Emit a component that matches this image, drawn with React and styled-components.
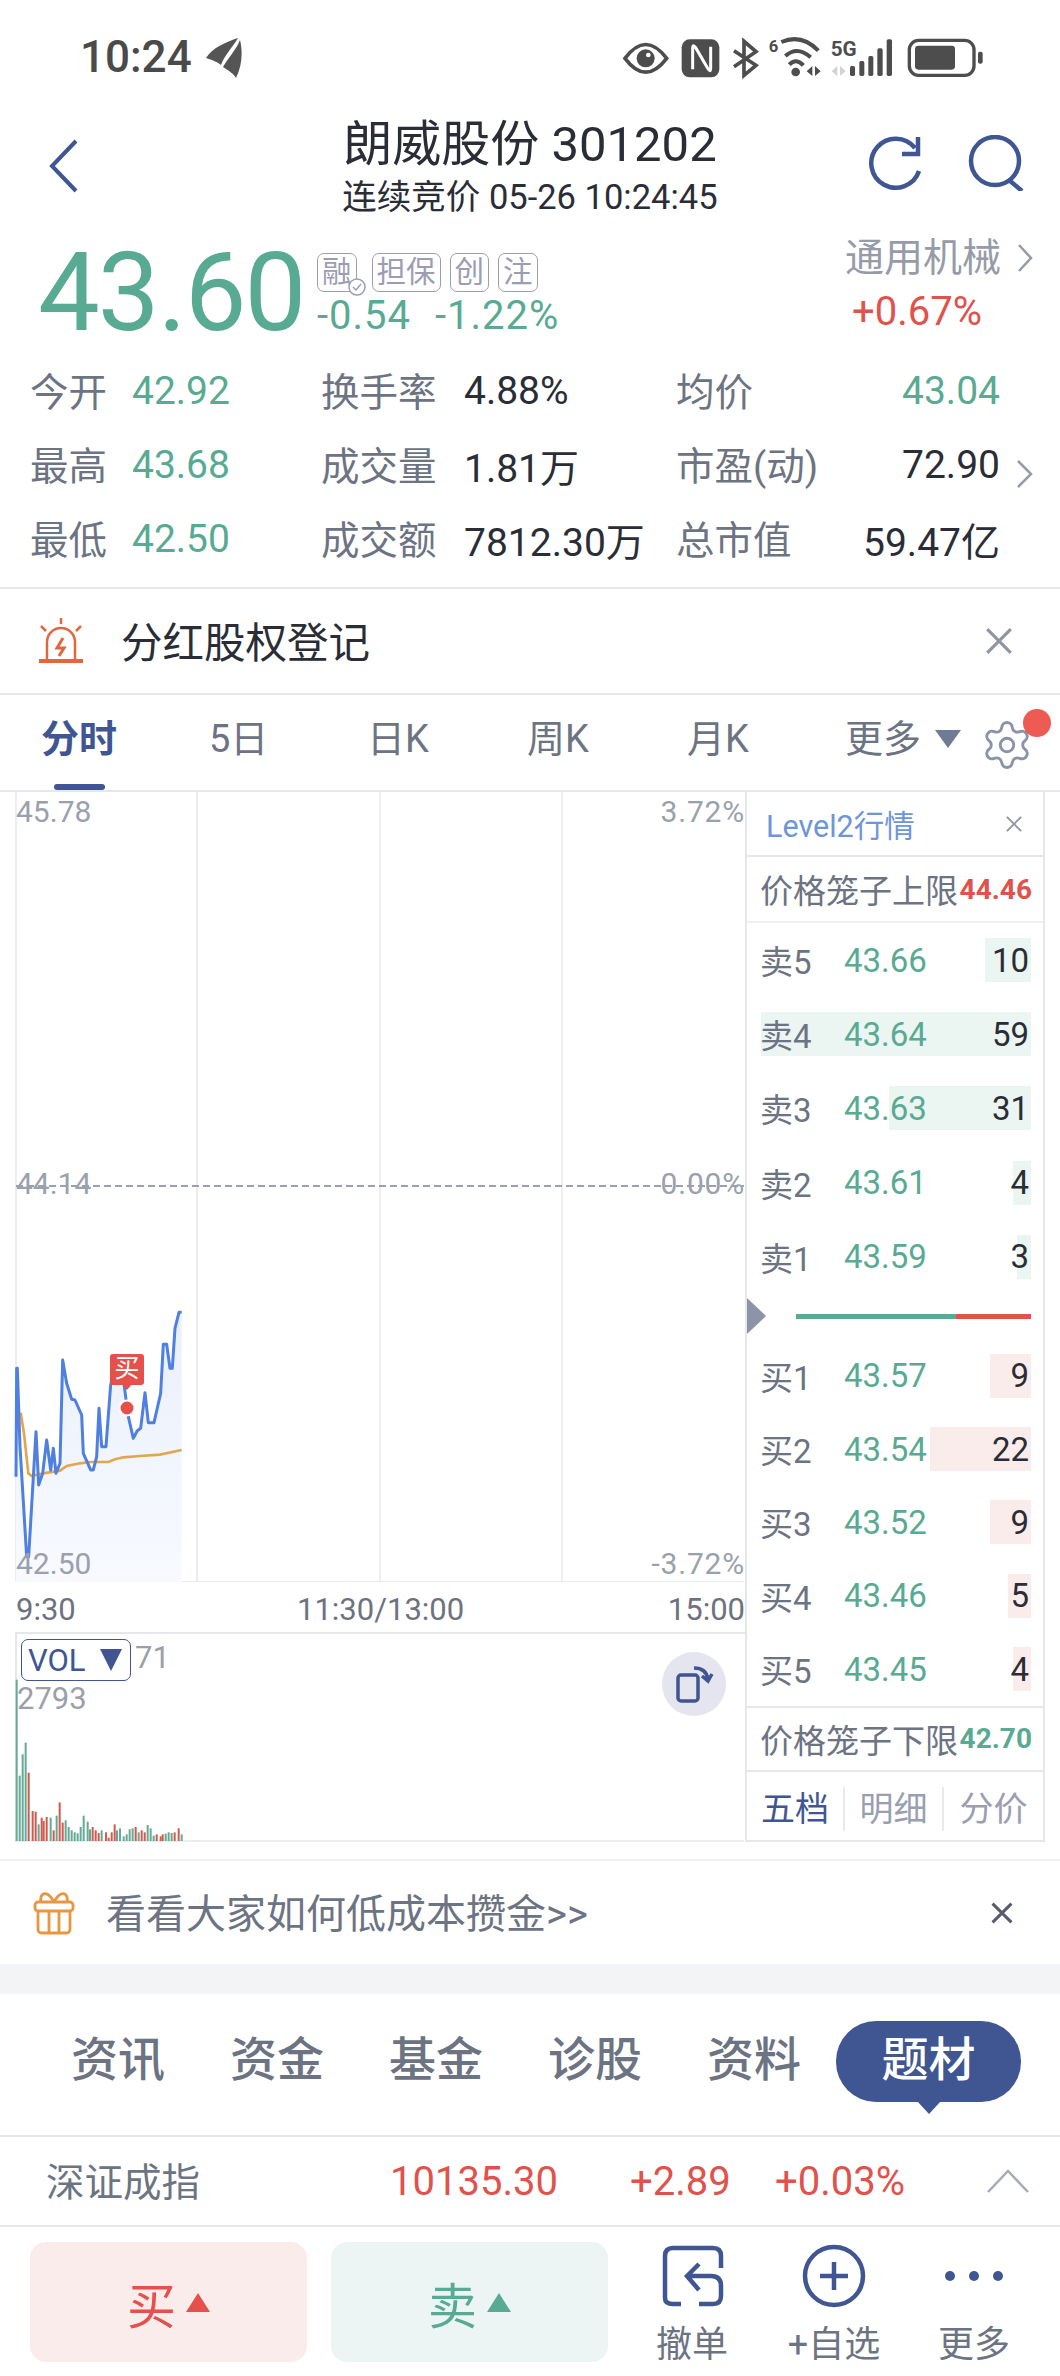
import React from 'react';
import styled, { createGlobalStyle } from 'styled-components';
import { Settings } from 'lucide-react';

const GREEN = '#58aa92';
const RED = '#e0524b';
const NAVY = '#3f5693';
const GREY = '#6c7382';
const INK = '#2a2d36';
const LINE = '#e6e7ea';

const Global = createGlobalStyle`
  html, body { margin: 0; padding: 0; background: #fff; }
  body { width: 1060px; height: 2376px; overflow: hidden; font-family: Roboto, "Noto Sans CJK SC", sans-serif; color: ${INK}; }
  * { box-sizing: border-box; }
`;

const Page = styled.div`width: 1060px; height: 2376px; display: flex; flex-direction: column;`;

/* status bar */
const StatusBar = styled.div`height: 115px; display: flex; align-items: flex-start; padding-left: 80px; position: relative;`;
const Clock = styled.div`font-size: 44px; line-height: 114px; color: #4a4a4a; font-weight: 500; width: 126px;`;
const Feather = styled.svg`width: 36px; height: 40px; margin-top: 38px;`;
const StatusIcons = styled.svg`width: 500px; height: 110px; margin-left: auto;`;

/* header */
const Header = styled.div`height: 110px; display: grid; grid-template-columns: 300px 460px 300px; position: relative;`;
const HeaderLeft = styled.div`padding: 24px 0 0 48px;`;
const TitleBlock = styled.div`display: flex; flex-direction: column; align-items: center;`;
const Title = styled.div`font-size: 49px; line-height: 60px; color: ${INK}; white-space: nowrap;`;
const Subtitle = styled.div`font-size: 34.5px; line-height: 44px; color: ${INK}; white-space: nowrap;`;
const HeaderRight = styled.div`display: flex; padding: 20px 32px 0 106px; gap: 46px;`;

/* quote */
const Quote = styled.div`height: 129px; display: flex; padding-left: 38px; position: relative;`;
const BigPrice = styled.div`font-size: 110px; line-height: 129px; letter-spacing: -2px; color: ${GREEN}; width: 279px; margin-top: 3px;`;
const QuoteMid = styled.div`padding-top: 28px; width: 528px;`;
const Tags = styled.div`display: flex; gap: 9px;`;
const Tag = styled.span`
  position: relative; height: 39px; padding: 0 4px; border: 1.5px solid #9c9db2; border-radius: 7px; color: #9c9db2;
  font-size: 29.5px; line-height: 36px; margin-right: ${p => p.$mr || 0}px;
`;
const CheckBadge = styled.svg`position: absolute; right: -10px; bottom: -5px; width: 18px; height: 18px;`;
const Change = styled.div`font-size: 40px; line-height: 50px; color: ${GREEN}; letter-spacing: 1px; word-spacing: 13px; margin-top: -1px;`;
const Sector = styled.div`padding-top: 11px; width: 205px;`;
const SectorName = styled.div`display: flex; align-items: center; gap: 15px; font-size: 39px; line-height: 44px; color: #969ba8; white-space: nowrap;`;
const SectorPct = styled.div`font-size: 40px; line-height: 50px; color: ${RED}; margin: 7px 0 0 7px; white-space: nowrap;`;

/* stats */
const Stats = styled.div`
  padding: 0 0 13px 31px; border-bottom: 2px solid ${LINE}; height: 235px;
  display: grid; grid-template-columns: 101px 190px 142px 213px 150px 173px 60px; grid-auto-rows: 74px; align-items: center;
`;
const StatLabel = styled.div`font-size: 38.5px; color: ${GREY}; white-space: nowrap; margin: -5px 0 0 -1px;`;
const StatValue = styled.div`font-size: 39px; white-space: nowrap; color: ${p => (p.$green ? GREEN : INK)}; text-align: ${p => (p.$right ? 'right' : 'left')};`;
const StatChevron = styled.svg`width: 20px; height: 32px; margin: 18px 0 0 15px; display: block;`;
const Empty = styled.div``;

/* notice */
const Notice = styled.div`height: 106px; display: flex; align-items: center; padding: 0 46px 0 38px; border-bottom: 2px solid ${LINE};`;
const NoticeText = styled.div`font-size: 41.5px; margin: -2px 0 0 37px; flex: 1; color: ${INK};`;

/* tabs */
const Tabs = styled.div`
  height: 97px; display: grid; grid-template-columns: 168px 158px 160px 160px 158px 1fr; padding-left: 41px;
  border-bottom: 2px solid ${LINE}; position: relative;
`;
const Tab = styled.div`
  position: relative; font-size: 38px; line-height: 88px; white-space: nowrap;
  color: ${p => (p.$active ? NAVY : GREY)}; font-weight: ${p => (p.$active ? 700 : 400)};
  ${p => p.$active && `&::after { content: ''; position: absolute; left: 13px; width: 51px; bottom: 0; height: 6px; border-radius: 3px; background: ${NAVY}; }`}
`;
const MoreTab = styled.div`display: flex; align-items: center; font-size: 38px; line-height: 88px; height: 88px; color: ${GREY};`;
const MoreTri = styled.span`width: 0; height: 0; margin-left: 14px; border-left: 13px solid transparent; border-right: 13px solid transparent; border-top: 18px solid #6f7a94;`;
const GearWrap = styled.div`position: absolute; left: 980px; top: 23px; color: #8a93a8; line-height: 0;`;
const RedDot = styled.span`position: absolute; left: 1023px; top: 14px; width: 28px; height: 28px; border-radius: 50%; background: #ee5b52;`;

/* market */
const Market = styled.div`display: grid; grid-template-columns: 745px 300px; height: 1050px;`;
const ChartCol = styled.div`display: flex; flex-direction: column; width: 745px;`;
const PriceChart = styled.div`position: relative; height: 790px;`;
const ChartSvg = styled.svg`display: block; width: 745px; height: 790px;`;
const AxisLabel = styled.span`
  position: absolute; font-size: 30px; line-height: 36px; color: #9aa0ad; white-space: nowrap;
  ${p => (p.$right ? 'right: 0; letter-spacing: 0.8px;' : 'left: 16px;')}
  top: ${p => p.$top}px;
`;
const BuyBadge = styled.div`
  position: absolute; left: 110px; top: 562px; width: 34px; height: 31px; border-radius: 3px; background: #e5504a; color: #fff;
  font-size: 25px; line-height: 30px; text-align: center;
  &::after { content: ''; position: absolute; left: 12px; bottom: -5px; border-left: 5px solid transparent; border-right: 5px solid transparent; border-top: 6px solid #e5504a; }
`;
const TimeAxis = styled.div`height: 50px; display: grid; grid-template-columns: 281px 1fr auto; align-items: center; padding: 5px 0 0 16px; font-size: 31px; color: #6e7280;`;
const VolPanel = styled.div`position: relative; flex: 1; border-top: 2px solid ${LINE}; margin-left: 15px; border-left: 2px solid ${LINE};`;
const VolSvg = styled.svg`display: block; position: absolute; left: -17px; top: -2px; width: 745px; height: 210px;`;
const VolBox = styled.div`
  position: absolute; left: 4px; top: 5px; width: 110px; height: 42px; border: 1.5px solid ${NAVY}; border-radius: 7px; color: ${NAVY};
  font-size: 31px; line-height: 39px; padding-left: 6px; display: flex; align-items: center; background: #fff;
`;
const VolTri = styled.span`width: 0; height: 0; margin-left: 14px; border-left: 11px solid transparent; border-right: 11px solid transparent; border-top: 22px solid ${NAVY};`;
const VolText = styled.span`position: absolute; font-size: 31px; line-height: 36px; color: #9a9fa9; left: ${p => p.$left}px; top: ${p => p.$top}px;`;
const RotateBtn = styled.div`position: absolute; left: 645px; top: 18px; width: 64px; height: 64px; border-radius: 50%; background: #e4e5ee; display: flex; align-items: center; justify-content: center;`;

/* level 2 */
const Panel = styled.div`width: 300px; border-left: 2px solid ${LINE}; border-right: 2px solid ${LINE}; border-bottom: 2px solid ${LINE}; display: flex; flex-direction: column;`;
const PanelHead = styled.div`height: 65px; display: flex; align-items: center; justify-content: space-between; padding: 0 20px 0 19px; border-bottom: 2px solid ${LINE}; color: #6f95d9; font-size: 30.5px;`;
const Cage = styled.div`height: 66px; display: flex; align-items: center; justify-content: space-between; padding: 0 11px 0 13px; font-size: 33px; color: ${GREY}; white-space: nowrap; border-bottom: ${p => (p.$last ? `2px solid ${LINE}` : '2px solid #eef0f2')}; border-top: ${p => (p.$last ? `2px solid ${LINE}` : '0')};`;
const CageValue = styled.span`font-size: 28px; font-weight: 700; color: ${p => (p.$green ? GREEN : RED)};`;
const Rows = styled.div`display: flex; flex-direction: column;`;
const BookRow = styled.div`position: relative; height: ${p => p.$h}px; display: grid; grid-template-columns: 84px 1fr auto; align-items: center; padding: 0 14px 0 13px; font-size: 33px;`;
const Bar = styled.span`position: absolute; right: 12px; top: 50%; height: 44px; margin-top: -22px; background: ${p => (p.$buy ? '#fbecec' : '#ebf5f2')};`;
const BookLabel = styled.span`position: relative; color: ${GREY};`;
const BookPrice = styled.span`position: relative; color: ${GREEN};`;
const BookQty = styled.span`position: relative; color: ${INK};`;
const Split = styled.div`position: relative; height: 45px; display: flex; align-items: center; padding: 0 12px 0 49px;`;
const SplitTri = styled.span`position: absolute; left: 0; top: 4px; width: 0; height: 0; border-top: 18px solid transparent; border-bottom: 18px solid transparent; border-left: 19px solid #8e93a8;`;
const SplitBuy = styled.span`height: 5px; background: ${GREEN}; width: 160px;`;
const SplitSell = styled.span`height: 5px; background: ${RED}; flex: 1;`;
const PanelTabs = styled.div`height: 66px; display: grid; grid-template-columns: 98px 99px 1fr; align-items: center; font-size: 34px; padding-top: 8px;`;
const PanelTab = styled.div`text-align: center; color: ${p => (p.$active ? NAVY : '#9a9eb0')}; border-right: ${p => (p.$last ? '0' : '2px solid #e8e9ec')}; line-height: 44px;`;

/* promo */
const Promo = styled.div`margin-top: 17px; height: 105px; border-top: 2px solid #f0f1f3; display: flex; align-items: center; padding: 0 46px 0 33px;`;
const PromoText = styled.div`font-size: 40px; color: ${GREY}; margin: -4px 0 0 31px; flex: 1; white-space: nowrap;`;
const Gap = styled.div`height: 30px; background: #f3f4f6;`;

/* content tabs */
const Content = styled.div`height: 143px; border-bottom: 2px solid ${LINE}; display: flex; padding-left: 71px; position: relative;`;
const ContentTab = styled.div`font-size: 47px; font-weight: 500; line-height: 132px; color: ${GREY}; width: 159px; white-space: nowrap;`;
const ActivePill = styled.div`
  position: absolute; left: 836px; top: 27px; width: 185px; height: 81px; border-radius: 40px; background: ${NAVY}; color: #fff;
  font-size: 47px; font-weight: 500; line-height: 78px; text-align: center;
  &::after { content: ''; position: absolute; left: 81px; bottom: -12px; border-left: 12px solid transparent; border-right: 12px solid transparent; border-top: 13px solid ${NAVY}; }
`;

/* index */
const IndexRow = styled.div`height: 90px; border-bottom: 2px solid ${LINE}; display: grid; grid-template-columns: 344px 240px 145px 211px 1fr; align-items: center; padding-left: 46px; font-size: 40px; color: ${RED};`;
const IndexName = styled.div`color: ${GREY}; white-space: nowrap; font-size: 38.5px; margin-top: -4px;`;
const IndexCell = styled.div`white-space: nowrap;`;

/* footer */
const Footer = styled.div`flex: 1; display: flex; padding: 15px 0 0 30px;`;
const TradeBtn = styled.div`
  width: 277px; height: 120px; border-radius: 16px; display: flex; align-items: center; justify-content: center; gap: 10px;
  font-size: 49px; background: ${p => (p.$buy ? '#fbecec' : '#ecf5f3')}; color: ${p => (p.$buy ? '#e5504a' : GREEN)}; margin-right: ${p => p.$mr}px;
`;
const TradeTri = styled.span`width: 0; height: 0; border-left: 12px solid transparent; border-right: 12px solid transparent; border-bottom: 19px solid currentColor;`;
const Action = styled.div`width: 140px; display: flex; flex-direction: column; align-items: center;`;
const ActionIcon = styled.svg`width: 64px; height: 64px; display: block; margin: 2px 0 0 ${p => p.$ml || 0}px;`;
const ActionLabel = styled.div`font-size: 36px; line-height: 44px; margin: 15px 0 0 ${p => p.$ml || 0}px; color: ${GREY}; white-space: nowrap;`;

const line = 'M48 650 L50 325 L52 325 L60 560 L80 890 L86 890 L108 515 L116 675 L128 640 L140 540 L152 630 L160 565 L168 640 L180 610 L188 300 L200 370 L215 418 L225 420 L245 465 L250 580 L272 630 L280 630 L290 590 L297 445 L305 560 L318 560 L332 375 L345 320 L368 340 L375 395 L385 470 L400 535 L412 512 L422 505 L435 398 L445 488 L462 488 L482 400 L490 253 L500 253 L510 325 L517 325 L525 205 L537 157 L545 157';
const avg = 'M62 458 L72 520 L85 640 L95 648 L130 640 L180 632 L200 618 L240 610 L270 606 L325 606 L345 598 L370 592 L420 588 L480 584 L545 570';

const vols = [[50,'g',484],[59,'g',196],[68,'g',260],[77,'g',295],[86,'r',205],[98,'r',90],[107,'r',88],[116,'g',50],[125,'r',70],[131,'r',60],[140,'r',72],[152,'g',70],[161,'r',32],[170,'g',76],[179,'r',116],[188,'r',55],[197,'g',62],[206,'g',42],[215,'g',32],[224,'g',26],[233,'g',23],[242,'g',42],[251,'g',76],[263,'g',58],[270,'g',35],[278,'r',42],[287,'r',32],[296,'r',24],[305,'g',32],[318,'r',26],[326,'r',10],[335,'r',26],[344,'r',50],[351,'g',32],[360,'g',38],[371,'g',14],[380,'g',20],[389,'g',35],[398,'g',38],[407,'r',42],[416,'g',26],[425,'r',32],[434,'r',26],[443,'g',48],[452,'g',38],[461,'g',16],[470,'r',20],[482,'r',14],[488,'r',20],[497,'g',22],[506,'g',26],[515,'g',24],[524,'r',26],[536,'r',38],[545,'g',20]];

const sells = [['卖5','43.66','10',46],['卖4','43.64','59',270],['卖3','43.63','31',142],['卖2','43.61','4',18],['卖1','43.59','3',14]];
const buys = [['买1','43.57','9',41],['买2','43.54','22',101],['买3','43.52','9',41],['买4','43.46','5',23],['买5','43.45','4',18]];

const Close = ({ size = 28, color = '#8f95a3', w = 3 }) => (
  <svg width={size} height={size} viewBox="0 0 28 28" fill="none" stroke={color} strokeWidth={w}><path d="M3 3 L25 25 M25 3 L3 25" /></svg>
);

const Status = () => (
  <StatusIcons viewBox="0 0 1500 330" fill="#4d4d4d">
    <path d="M195 175 Q257 92 320 175 Q257 258 195 175Z" fill="none" stroke="#4d4d4d" strokeWidth="11" />
    <circle cx="257" cy="175" r="27" />
    <circle cx="265" cy="165" r="7" fill="#fff" />
    <rect x="365" y="118" width="113" height="114" rx="24" />
    <path d="M398 208 V145 Q398 130 407 143 L443 205 Q452 220 452 203 V140" fill="none" stroke="#fff" strokeWidth="9" />
    <path d="M522 152 L588 196 L552 226 V124 L588 155 L522 200" fill="none" stroke="#4d4d4d" strokeWidth="11" />
    <text x="626" y="156" fontSize="50" fontWeight="700" fontFamily="Roboto, sans-serif">6</text>
    <path d="M664 126 Q725 100 775 152 M676 168 Q712 136 752 172 M688 194 Q708 172 730 196" fill="none" stroke="#4d4d4d" strokeWidth="12" />
    <circle cx="707" cy="216" r="13" />
    <path d="M740 214 L757 198 V228Z M765 198 V228 L782 214Z" />
    <text x="812" y="168" fontSize="58" fontWeight="700" fontFamily="Roboto, sans-serif" textLength="78" lengthAdjust="spacingAndGlyphs">5G</text>
    <path d="M815 214 L832 198 V228Z M840 198 V228 L857 214Z" fill="#d2d2d2" />
    <rect x="870" y="198" width="15" height="30" rx="5" />
    <rect x="898" y="183" width="15" height="45" rx="5" />
    <rect x="925" y="168" width="15" height="60" rx="5" />
    <rect x="952" y="145" width="16" height="83" rx="5" />
    <rect x="980" y="118" width="16" height="110" rx="5" />
    <rect x="1048" y="121" width="194" height="105" rx="28" fill="none" stroke="#4d4d4d" strokeWidth="10" />
    <rect x="1065" y="137" width="120" height="72" rx="10" />
    <rect x="1254" y="155" width="14" height="36" rx="6" />
  </StatusIcons>
);

export default function App() {
  return (
    <Page>
      <Global />
      <StatusBar>
        <Clock>10:24</Clock>
        <Feather viewBox="0 0 36 40" fill="#555">
          <path d="M32 0 C20 4 6 10 0 20 C6 22 12 24 15 27 C18 18 26 10 32 0Z" />
          <path d="M34 2 C30 12 22 20 17 29 C22 32 28 36 30 40 C36 28 37 14 34 2Z" />
        </Feather>
        <Status />
      </StatusBar>

      <Header>
        <HeaderLeft>
          <svg width="32" height="54" viewBox="0 0 32 54" fill="none" stroke={NAVY} strokeWidth="4"><path d="M28 2 L4 27 L28 52" /></svg>
        </HeaderLeft>
        <TitleBlock>
          <Title>朗威股份 301202</Title>
          <Subtitle>连续竞价 05-26 10:24:45</Subtitle>
        </TitleBlock>
        <HeaderRight>
          <svg width="56" height="56" viewBox="0 0 56 56" fill="none" stroke={NAVY} strokeWidth="4.5">
            <path d="M53 36 A24.5 24.5 0 1 1 49 13 M52 2 V19 H36" />
          </svg>
          <svg width="56" height="56" viewBox="0 0 56 56" fill="none" stroke={NAVY} strokeWidth="4.5">
            <circle cx="27" cy="26" r="24" /><path d="M41 45 L54 56" />
          </svg>
        </HeaderRight>
      </Header>

      <Quote>
        <BigPrice>43.60</BigPrice>
        <QuoteMid>
          <Tags>
            <Tag $mr={6}>融<CheckBadge viewBox="0 0 18 18" fill="#fff" stroke="#9c9db2" strokeWidth="1.5"><circle cx="9" cy="9" r="8" /><path d="M5 9 L8 12 L13 6" fill="none" /></CheckBadge></Tag>
            <Tag>担保</Tag>
            <Tag>创</Tag>
            <Tag>注</Tag>
          </Tags>
          <Change>-0.54 -1.22%</Change>
        </QuoteMid>
        <Sector>
          <SectorName>通用机械
            <svg width="18" height="32" viewBox="0 0 18 32" fill="none" stroke="#969ba8" strokeWidth="2.5"><path d="M3 3 L15 16 L3 29" /></svg>
          </SectorName>
          <SectorPct>+0.67%</SectorPct>
        </Sector>
      </Quote>

      <Stats>
        <StatLabel>今开</StatLabel><StatValue $green>42.92</StatValue>
        <StatLabel>换手率</StatLabel><StatValue>4.88%</StatValue>
        <StatLabel>均价</StatLabel><StatValue $green $right>43.04</StatValue><Empty />
        <StatLabel>最高</StatLabel><StatValue $green>43.68</StatValue>
        <StatLabel>成交量</StatLabel><StatValue>1.81万</StatValue>
        <StatLabel>市盈(动)</StatLabel><StatValue $right>72.90</StatValue>
        <StatChevron viewBox="0 0 20 32" fill="none" stroke="#969ba8" strokeWidth="2.5"><path d="M3 3 L16 16 L3 29" /></StatChevron>
        <StatLabel>最低</StatLabel><StatValue $green>42.50</StatValue>
        <StatLabel>成交额</StatLabel><StatValue>7812.30万</StatValue>
        <StatLabel>总市值</StatLabel><StatValue $right>59.47亿</StatValue><Empty />
      </Stats>

      <Notice>
        <svg width="46" height="46" viewBox="0 0 46 46" fill="none" stroke="#e2673f" strokeWidth="2.5">
          <path d="M9 42 V24 A14 14 0 0 1 37 24 V42" />
          <path d="M1 43 H45" strokeWidth="4" />
          <path d="M23 0 V6 M3 8 L8 13 M43 8 L38 13" />
          <path d="M25 20 L19 30 H26 L21 38" strokeWidth="3" />
        </svg>
        <NoticeText>分红股权登记</NoticeText>
        <Close size={30} />
      </Notice>

      <Tabs>
        <Tab $active>分时</Tab>
        <Tab>5日</Tab>
        <Tab>日K</Tab>
        <Tab>周K</Tab>
        <Tab>月K</Tab>
        <MoreTab>更多<MoreTri /></MoreTab>
        <GearWrap><Settings size={54} strokeWidth={1.3} /></GearWrap>
        <RedDot />
      </Tabs>

      <Market>
        <ChartCol>
          <PriceChart>
            <ChartSvg viewBox="0 792 745 790" fill="none">
              <defs>
                <linearGradient id="area" x1="0" y1="0" x2="0" y2="1">
                  <stop offset="0" stopColor="#e9effb" />
                  <stop offset="1" stopColor="#f8faff" />
                </linearGradient>
              </defs>
              <path d="M16 792 V1582 M197 792 V1582 M380 792 V1582 M562 792 V1582" stroke="#edeef1" strokeWidth="2" />
              <path d="M16 1582 H744" stroke="#e9eaed" strokeWidth="2" />
              <g transform="translate(0 1260) scale(0.3333)">
                <path d={`${line} L545 966 L48 966Z`} fill="url(#area)" />
                <path d={avg} stroke="#e3a650" strokeWidth="8" />
                <path d={line} stroke="#4f7fe0" strokeWidth="9" strokeLinejoin="round" />
              </g>
              <path d="M16 1186 H744" stroke="#98a0b2" strokeWidth="2" strokeDasharray="7 4" />
              <circle cx="127" cy="1408" r="7.5" fill="#e5504a" stroke="#fff" strokeWidth="2" />
            </ChartSvg>
            <AxisLabel $top={2}>45.78</AxisLabel>
            <AxisLabel $top={2} $right>3.72%</AxisLabel>
            <AxisLabel $top={374}>44.14</AxisLabel>
            <AxisLabel $top={374} $right>0.00%</AxisLabel>
            <AxisLabel $top={754}>42.50</AxisLabel>
            <AxisLabel $top={754} $right>-3.72%</AxisLabel>
            <BuyBadge>买</BuyBadge>
          </PriceChart>
          <TimeAxis><span>9:30</span><span>11:30/13:00</span><span>15:00</span></TimeAxis>
          <VolPanel>
            <VolSvg viewBox="0 1632 745 210">
              <path d="M16 1841 H744" stroke="#eceded" strokeWidth="2" />
              {vols.map(([x, c, h], i) => (
                <rect key={i} x={x / 3 - 1} y={1841 - h / 3} width="2" height={h / 3} fill={c === 'g' ? '#65a996' : '#cf5a50'} />
              ))}
            </VolSvg>
            <VolBox>VOL<VolTri /></VolBox>
            <VolText $left={118} $top={6}>71</VolText>
            <VolText $left={0} $top={47}>2793</VolText>
            <RotateBtn>
              <svg width="40" height="40" viewBox="0 0 40 40" fill="none" stroke={NAVY} strokeWidth="3.5">
                <rect x="4" y="11" width="20" height="26" rx="3" />
                <path d="M20 4 Q32 4 34 15 M28 12 L34 17 L38 10" />
              </svg>
            </RotateBtn>
          </VolPanel>
        </ChartCol>
        <Panel>
          <PanelHead>Level2行情<Close size={18} /></PanelHead>
          <Cage>价格笼子上限<CageValue>44.46</CageValue></Cage>
          <Rows>
            {sells.map(([l, p, q, w]) => (
              <BookRow key={l} $h={74.2}>
                <Bar style={{ width: w }} />
                <BookLabel>{l}</BookLabel><BookPrice>{p}</BookPrice><BookQty>{q}</BookQty>
              </BookRow>
            ))}
          </Rows>
          <Split><SplitTri /><SplitBuy /><SplitSell /></Split>
          <Rows>
            {buys.map(([l, p, q, w]) => (
              <BookRow key={l} $h={73.4}>
                <Bar $buy style={{ width: w }} />
                <BookLabel>{l}</BookLabel><BookPrice>{p}</BookPrice><BookQty>{q}</BookQty>
              </BookRow>
            ))}
          </Rows>
          <Cage $last>价格笼子下限<CageValue $green>42.70</CageValue></Cage>
          <PanelTabs>
            <PanelTab $active>五档</PanelTab>
            <PanelTab>明细</PanelTab>
            <PanelTab $last>分价</PanelTab>
          </PanelTabs>
        </Panel>
      </Market>

      <Promo>
        <svg width="42" height="44" viewBox="0 0 42 44" fill="none" stroke="#e8963f" strokeWidth="2.8">
          <path d="M21 11 C14 -2 6 2 8 11 M21 11 C28 -2 36 2 34 11" />
          <rect x="2" y="11" width="38" height="9" rx="3" />
          <path d="M5 20 V38 Q5 42 9 42 H33 Q37 42 37 38 V20 M16 20 V42 M26 20 V42" />
        </svg>
        <PromoText>看看大家如何低成本攒金&gt;&gt;</PromoText>
        <Close size={24} color="#555c6b" w={3.5} />
      </Promo>
      <Gap />

      <Content>
        <ContentTab>资讯</ContentTab>
        <ContentTab>资金</ContentTab>
        <ContentTab>基金</ContentTab>
        <ContentTab>诊股</ContentTab>
        <ContentTab>资料</ContentTab>
        <ActivePill>题材</ActivePill>
      </Content>

      <IndexRow>
        <IndexName>深证成指</IndexName>
        <IndexCell>10135.30</IndexCell>
        <IndexCell>+2.89</IndexCell>
        <IndexCell>+0.03%</IndexCell>
        <svg width="44" height="24" viewBox="0 0 44 24" fill="none" stroke="#a5aab6" strokeWidth="2.5"><path d="M2 23 L22 2 L42 23" /></svg>
      </IndexRow>

      <Footer>
        <TradeBtn $buy $mr={24}>买<TradeTri /></TradeBtn>
        <TradeBtn $mr={16}>卖<TradeTri /></TradeBtn>
        <Action>
          <ActionIcon $ml={-3} viewBox="0 0 64 64" fill="none" stroke={NAVY} strokeWidth="4.5">
            <path d="M60 24 V12 Q60 4 52 4 H12 Q4 4 4 12 V54 Q4 60 12 60 H20" />
            <path d="M38 60 H52 Q60 60 60 52 V42 Q60 32 50 32 H28 M38 20 L26 32 L38 46" />
          </ActionIcon>
          <ActionLabel $ml={-4}>撤单</ActionLabel>
        </Action>
        <Action>
          <ActionIcon viewBox="0 0 64 64" fill="none" stroke={NAVY} strokeWidth="4.5">
            <circle cx="32" cy="32" r="29" /><path d="M32 18 V46 M18 32 H46" />
          </ActionIcon>
          <ActionLabel>+自选</ActionLabel>
        </Action>
        <Action>
          <ActionIcon viewBox="0 0 64 64" fill={NAVY}>
            <circle cx="8" cy="32" r="5" /><circle cx="32" cy="32" r="5" /><circle cx="56" cy="32" r="5" />
          </ActionIcon>
          <ActionLabel>更多</ActionLabel>
        </Action>
      </Footer>
    </Page>
  );
}
